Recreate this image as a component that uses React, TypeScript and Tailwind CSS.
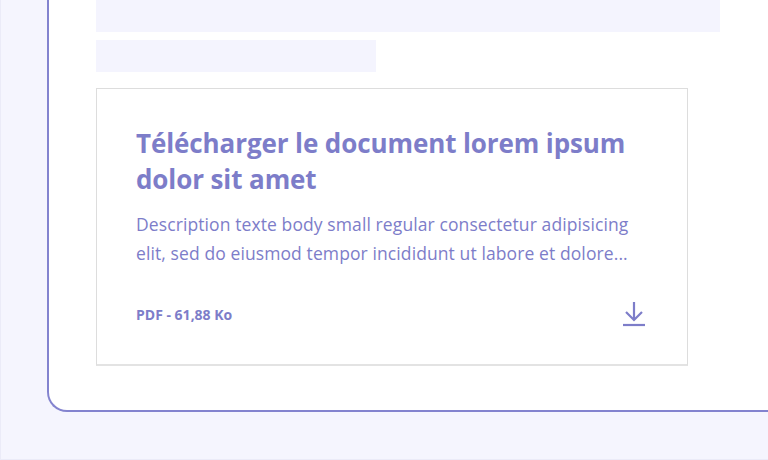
import React from "react";

export default function App() {
  const font = { fontFamily: "'Open Sans', 'Noto Sans', sans-serif" };
  return (
    <div
      className="w-[768px] h-[460px] overflow-hidden bg-[#f5f5fe] border-l border-b border-[#ebebf8] flex flex-col pl-[46px] pb-[47px]"
      style={font}
    >
      <div className="flex-1 bg-white border-l-2 border-b-2 border-[#8383cf] rounded-bl-[20px] pl-[47px]">
        <div className="h-[32px] w-[624px] bg-[#f4f4fe]" />
        <div className="h-[32px] w-[280px] bg-[#f4f4fe] mt-2" />
        <div className="mt-4 w-[592px] h-[278px] border border-[#dddddd] border-b-2 border-b-[#e3e3e3] pl-[39px] pr-[20px] pt-[36px] flex flex-col text-[#7d7dc9]">
          <h2 className="text-[26px] leading-[36px] font-bold tracking-[-0.1px] whitespace-nowrap">
            Télécharger le document lorem ipsum<br />dolor sit amet
          </h2>
          <p className="mt-[13px] text-[17.5px] leading-[29px] tracking-[0.1px] whitespace-nowrap">
            Description texte body small regular consectetur adipisicing<br />
            elit, sed do eiusmod tempor incididunt ut labore et dolore...
          </p>
          <div className="mt-auto mb-[37px] flex items-center justify-between pr-[20px]">
            <span className="text-[14px] font-bold">PDF - 61,88 Ko</span>
            <svg width="24" height="26" viewBox="0 0 24 26" className="mr-[1px]">
              <path d="M12 1v18M4 11l8 8 8-8" fill="none" stroke="#7d7dc9" strokeWidth="2.2" />
              <path d="M1 24h22" stroke="#7d7dc9" strokeWidth="2.2" />
            </svg>
          </div>
        </div>
      </div>
    </div>
  );
}
